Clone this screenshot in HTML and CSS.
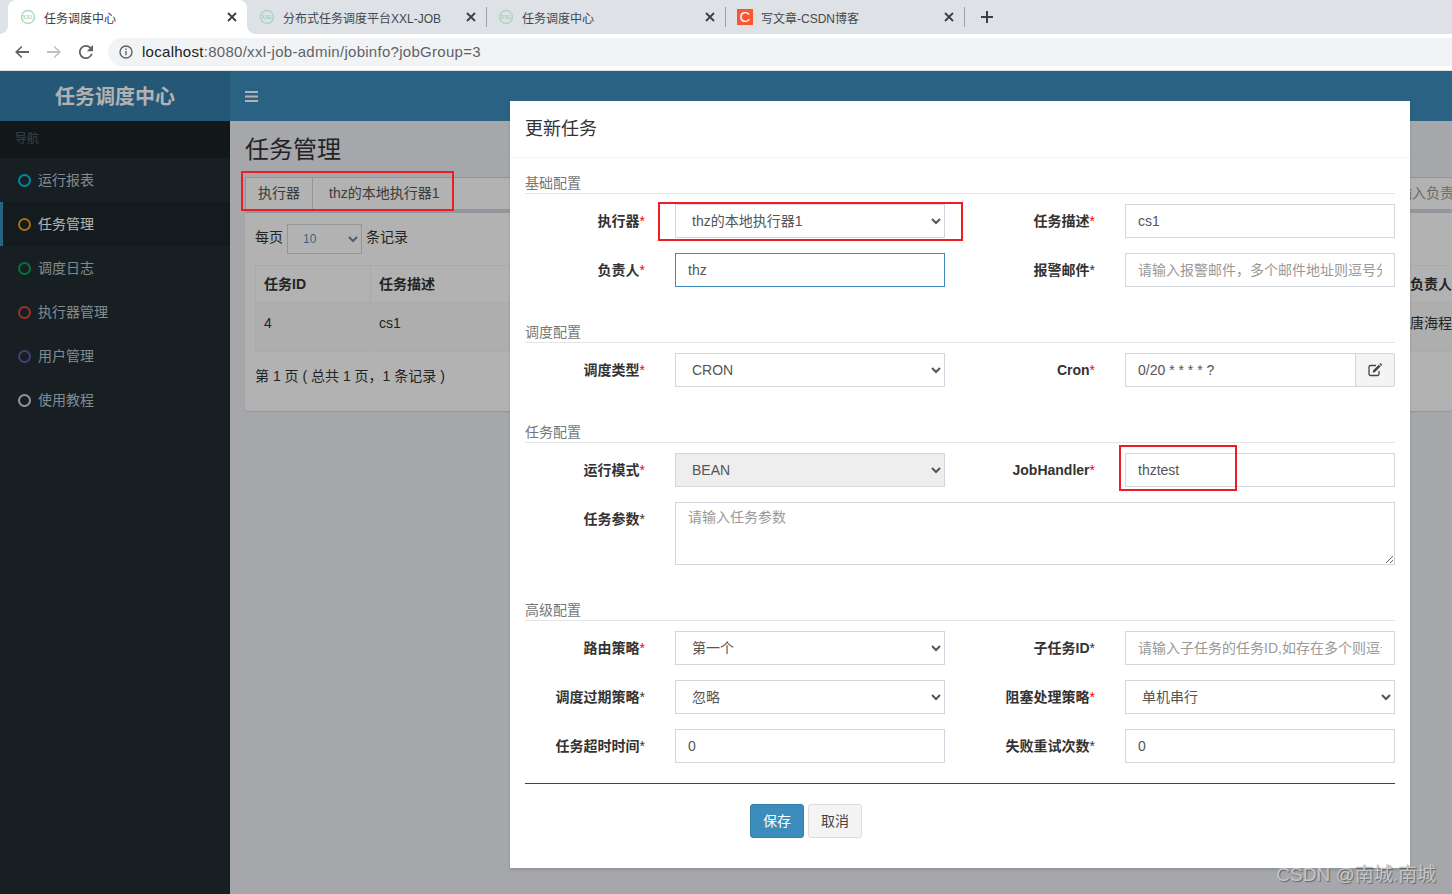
FILE: index.html
```html
<!DOCTYPE html>
<html lang="zh-CN">
<head>
<meta charset="utf-8">
<title>任务调度中心</title>
<link rel="stylesheet" href="styles.css">
</head>
<body>
<div class="tabstrip">
  <div class="tab active">
    <svg class="favicon" viewBox="0 0 16 16"><circle cx="8" cy="8" r="6.500" fill="none" stroke="#a0d8c0" stroke-width="1.300"/><text x="8" y="10" text-anchor="middle" class="favtext">XXL</text></svg>
    <span class="tab-title">任务调度中心</span>
    <svg class="close" viewBox="0 0 10 10"><path d="M1 1l8 8M9 1l-8 8"/></svg>
  </div>
  <div class="tab sep">
    <svg class="favicon" viewBox="0 0 16 16"><circle cx="8" cy="8" r="6.500" fill="none" stroke="#a0d8c0" stroke-width="1.300"/><text x="8" y="10" text-anchor="middle" class="favtext">XXL</text></svg>
    <span class="tab-title">分布式任务调度平台XXL-JOB</span>
    <svg class="close" viewBox="0 0 10 10"><path d="M1 1l8 8M9 1l-8 8"/></svg>
  </div>
  <div class="tab sep">
    <svg class="favicon" viewBox="0 0 16 16"><circle cx="8" cy="8" r="6.500" fill="none" stroke="#a0d8c0" stroke-width="1.300"/><text x="8" y="10" text-anchor="middle" class="favtext">XXL</text></svg>
    <span class="tab-title">任务调度中心</span>
    <svg class="close" viewBox="0 0 10 10"><path d="M1 1l8 8M9 1l-8 8"/></svg>
  </div>
  <div class="tab sep">
    <span class="csdn-icon">C</span>
    <span class="tab-title">写文章-CSDN博客</span>
    <svg class="close" viewBox="0 0 10 10"><path d="M1 1l8 8M9 1l-8 8"/></svg>
  </div>
  <svg class="newtab" viewBox="0 0 12 12"><path d="M6 0v12M0 6h12"/></svg>
</div>

<div class="toolbar">
  <svg class="nav-icon" viewBox="0 0 14 12"><path class="ico-dark" d="M14 5.100H3.400l4-4L6.300 0 0 6l6.300 6 1.100-1.100-4-4H14z"/></svg>
  <svg class="nav-icon" viewBox="0 0 14 12"><path class="ico-light" d="M0 5.100h10.600l-4-4L7.700 0 14 6l-6.300 6-1.100-1.100 4-4H0z"/></svg>
  <svg class="nav-icon reload" viewBox="0 0 16 16"><path class="ico-dark" d="M13.600 2.400A8 8 0 1 0 15.700 10h-2.100a6 6 0 1 1-1.400-6.200L9 7h7V0z"/></svg>
  <div class="omnibox">
    <svg class="info" viewBox="0 0 14 14"><circle cx="7" cy="7" r="6" fill="none" stroke="#5f6368" stroke-width="1.400"/><path d="M6.300 6h1.400v4.200H6.300zM6.300 3.600h1.400V5H6.300z" fill="#5f6368"/></svg>
    <span class="url"><span class="host">localhost</span>:8080/xxl-job-admin/jobinfo?jobGroup=3</span>
  </div>
</div>

<div class="app">
  <aside class="sidebar">
    <div class="logo">任务调度中心</div>
    <div class="nav-header">导航</div>
    <div class="nav-item"><i class="ring aqua"></i>运行报表</div>
    <div class="nav-item current"><i class="ring yellow"></i>任务管理</div>
    <div class="nav-item"><i class="ring green"></i>调度日志</div>
    <div class="nav-item"><i class="ring red"></i>执行器管理</div>
    <div class="nav-item"><i class="ring purple"></i>用户管理</div>
    <div class="nav-item"><i class="ring gray"></i>使用教程</div>
  </aside>

  <main class="main">
    <div class="topbar">
      <svg class="bars" viewBox="0 0 13 11"><path d="M0 0h13v2H0zM0 4.500h13v2H0zM0 9h13v2H0z"/></svg>
    </div>
    <div class="content">
      <h1 class="page-title">任务管理</h1>
      <div class="filters">
        <div class="filter-group">
          <span class="addon">执行器</span>
          <span class="filter-value">thz的本地执行器1</span>
        </div>
        <div class="filter-input">请输入负责人</div>
      </div>
      <section class="box">
        <div class="length-row">每页<select class="length"><option>10</option></select>条记录</div>
        <table class="grid-table">
          <thead>
            <tr><th class="c1">任务ID</th><th class="c2">任务描述</th><th class="c3">负责人</th></tr>
          </thead>
          <tbody>
            <tr><td>4</td><td>cs1</td><td>唐海程</td></tr>
          </tbody>
        </table>
        <div class="page-info">第 1 页 ( 总共 1 页，1 条记录 )</div>
      </section>
    </div>
  </main>

  <div class="backdrop"></div>

  <div class="modal">
    <h4 class="modal-title">更新任务</h4>
    <form class="modal-body">
      <div class="legend first">基础配置</div>
      <div class="form-grid">
        <label class="lbl">执行器<em>*</em></label>
        <select class="ctl"><option>thz的本地执行器1</option></select>
        <label class="lbl">任务描述<em>*</em></label>
        <input class="ctl" value="cs1">
        <label class="lbl">负责人<em>*</em></label>
        <input class="ctl focus" value="thz">
        <label class="lbl">报警邮件<b>*</b></label>
        <input class="ctl" placeholder="请输入报警邮件，多个邮件地址则逗号分隔">
      </div>

      <div class="legend">调度配置</div>
      <div class="form-grid">
        <label class="lbl">调度类型<em>*</em></label>
        <select class="ctl"><option>CRON</option></select>
        <label class="lbl">Cron<em>*</em></label>
        <div class="input-group">
          <input class="ctl" value="0/20 * * * * ?">
          <span class="group-btn"><svg viewBox="0 0 14 14"><path class="edit-box" d="M11 8v3a1.500 1.500 0 0 1-1.500 1.500h-7A1.500 1.500 0 0 1 1 11V4a1.500 1.500 0 0 1 1.500-1.500H8"/><path class="edit-pen" d="M5 7.500L10.800 1.700l1.800 1.800L6.800 9.300 4.800 9.600zM11.400 1.100l.6-.6a.7.700 0 0 1 1 0l.8.8a.7.700 0 0 1 0 1l-.6.6z"/></svg></span>
        </div>
      </div>

      <div class="legend">任务配置</div>
      <div class="form-grid">
        <label class="lbl">运行模式<em>*</em></label>
        <select class="ctl disabled"><option>BEAN</option></select>
        <label class="lbl">JobHandler<em>*</em></label>
        <input class="ctl" value="thztest">
        <label class="lbl">任务参数<b>*</b></label>
        <textarea class="ctl area" placeholder="请输入任务参数"></textarea>
      </div>

      <div class="legend">高级配置</div>
      <div class="form-grid">
        <label class="lbl">路由策略<em>*</em></label>
        <select class="ctl"><option>第一个</option></select>
        <label class="lbl">子任务ID<b>*</b></label>
        <input class="ctl" placeholder="请输入子任务的任务ID,如存在多个则逗号分隔">
        <label class="lbl">调度过期策略<b>*</b></label>
        <select class="ctl"><option>忽略</option></select>
        <label class="lbl">阻塞处理策略<em>*</em></label>
        <select class="ctl"><option>单机串行</option></select>
        <label class="lbl">任务超时时间<b>*</b></label>
        <input class="ctl" value="0">
        <label class="lbl">失败重试次数<b>*</b></label>
        <input class="ctl" value="0">
      </div>

      <hr class="rule">
      <div class="actions">
        <button type="button" class="btn primary">保存</button>
        <button type="button" class="btn">取消</button>
      </div>
    </form>
  </div>

  <div class="mark mark-filter"></div>
  <div class="mark mark-executor"></div>
  <div class="mark mark-handler"></div>
  <div class="watermark">CSDN @南城.南城</div>
</div>
</body>
</html>
```
FILE: styles.css
```css
* { box-sizing: border-box; }
html, body { margin: 0; height: 894px; overflow: hidden; }
body {
  font-family: "Liberation Sans", "Noto Sans CJK SC", sans-serif;
  font-size: 14px;
  color: #333;
  background: #fff;
}

/* browser chrome */
.tabstrip {
  display: flex;
  align-items: center;
  height: 34px;
  padding-left: 8px;
  background: #dee1e6;
}
.tab {
  position: relative;
  display: flex;
  align-items: center;
  flex: 0 0 239px;
  height: 34px;
  padding: 0 10px 0 12px;
  font-size: 12px;
  color: #45484c;
}
.tab.active {
  background: #fff;
  border-radius: 8px 8px 0 0;
  color: #3c4043;
}
.tab.active::before,
.tab.active::after {
  content: "";
  position: absolute;
  bottom: 0;
  width: 8px;
  height: 8px;
}
.tab.active::before {
  left: -8px;
  background: radial-gradient(circle at 0 0, #dee1e6 7.500px, #fff 8px);
}
.tab.active::after {
  right: -8px;
  background: radial-gradient(circle at 100% 0, #dee1e6 7.500px, #fff 8px);
}
.tab.sep::after {
  content: "";
  position: absolute;
  right: -1px;
  top: 7px;
  width: 1px;
  height: 20px;
  background: #9aa0a6;
}
.favicon { flex: none; width: 16px; height: 16px; margin-right: 8px; }
.favtext { font-size: 5.500px; fill: #84c8a8; font-family: "Liberation Serif", serif; }
.csdn-icon {
  flex: none;
  width: 16px;
  height: 16px;
  margin-right: 8px;
  background: #fc5531;
  color: #fff;
  font-size: 15px;
  line-height: 16px;
  text-align: center;
}
.tab-title { flex: 1; white-space: nowrap; overflow: hidden; }
.close { flex: none; width: 10px; height: 10px; }
.close path { stroke: #3c4043; stroke-width: 1.800; fill: none; }
.newtab { flex: none; width: 12px; height: 12px; margin-left: 17px; }
.newtab path { stroke: #3c4043; stroke-width: 2; fill: none; }

.toolbar {
  display: flex;
  align-items: center;
  height: 37px;
  padding: 4px 0 4px 15px;
  background: #fff;
  border-bottom: 1px solid #dfe1e5;
}
.nav-icon { flex: none; width: 14px; height: 12px; margin-right: 18px; }
.nav-icon.reload { height: 14px; margin-right: 15px; }
.ico-dark { fill: #5f6368; }
.ico-light { fill: #bdc1c6; }
.omnibox {
  display: flex;
  align-items: center;
  flex: 1;
  height: 28px;
  padding-left: 11px;
  background: #f1f3f4;
  border-radius: 14px 0 0 14px;
}
.info { flex: none; width: 14px; height: 14px; margin-right: 9px; }
.url {
  padding-bottom: 2px;
  font-size: 15px;
  letter-spacing: .28px;
  color: #5f6368;
  white-space: nowrap;
}
.host { color: #202124; }

/* application */
.app {
  position: relative;
  display: flex;
  height: 823px;
  overflow: hidden;
  background: #ecf0f5;
}
.sidebar { flex: 0 0 230px; background: #222d32; color: #b8c7ce; }
.logo {
  height: 50px;
  background: #367fa9;
  color: #fff;
  font-size: 20px;
  font-weight: bold;
  line-height: 52px;
  text-align: center;
}
.nav-header {
  height: 37px;
  padding-left: 15px;
  background: #1a2226;
  color: #4b646f;
  font-size: 12px;
  line-height: 37px;
}
.nav-item {
  display: flex;
  align-items: center;
  gap: 7px;
  height: 44px;
  padding: 0 0 2px 18px;
}
.nav-item.current {
  padding-left: 15px;
  border-left: 3px solid #3c8dbc;
  background: #1e282c;
  color: #fff;
}
.ring {
  flex: none;
  width: 13px;
  height: 13px;
  margin-top: 2px;
  border: 2px solid;
  border-radius: 50%;
}
.aqua { border-color: #00c0ef; }
.yellow { border-color: #f39c12; }
.green { border-color: #00a65a; }
.red { border-color: #dd4b39; }
.purple { border-color: #605ca8; }
.gray { border-color: #d2d6de; }

.main { flex: 1; min-width: 0; overflow: hidden; }
.topbar {
  display: flex;
  align-items: center;
  height: 50px;
  padding-left: 15px;
  background: #3c8dbc;
}
.bars { width: 13px; height: 11px; fill: #fff; }
.content { padding: 15px 0 0 15px; }
.page-title {
  margin: 0 0 14px;
  font-size: 24px;
  font-weight: 400;
  line-height: 27px;
}
.filters { display: flex; height: 33px; }
.filter-group {
  display: flex;
  flex: 0 0 1125px;
  border: 1px solid #d2d6de;
  background: #fff;
  line-height: 31px;
  color: #555;
}
.addon { flex: 0 0 67px; text-align: center; border-right: 1px solid #d2d6de; }
.filter-value { padding-left: 16px; }
.filter-input {
  flex: none;
  width: 200px;
  padding-left: 13px;
  border: 1px solid #d2d6de;
  background: #fff;
  color: #999;
  line-height: 31px;
}
.box {
  height: 201px;
  padding: 11px 0 0 10px;
  border-top: 3px solid #d2d6de;
  border-radius: 3px;
  background: #fff;
  box-shadow: 0 1px 1px rgba(0, 0, 0, .1);
}
.length-row { display: flex; align-items: flex-start; height: 30px; line-height: 26px; color: #333; }
.length {
  flex: none;
  width: 75px;
  height: 30px;
  margin: 0 4px;
  padding: 0 11px;
  border: 1px solid #d2d6de;
  border-radius: 0;
  background: #fff;
  color: #5f8fb0;
  font: 12px "Liberation Sans", sans-serif;
}
.grid-table {
  width: 1300px;
  margin-top: 11px;
  border-collapse: collapse;
  table-layout: fixed;
  line-height: 20px;
}
.grid-table th, .grid-table td { padding: 8px; border: 1px solid #f4f4f4; text-align: left; }
.grid-table th { height: 37px; font-weight: bold; }
.grid-table td { height: 49px; padding-top: 10px; vertical-align: top; color: #333; background: #f9f9f9; }
.c1 { width: 115px; }
.c2 { width: 1031px; }
.page-info { margin-top: 14px; line-height: 20px; }

.backdrop { position: absolute; inset: 0; background: rgba(0, 0, 0, .3); }

/* dialog */
.modal {
  position: absolute;
  left: 510px;
  top: 30px;
  width: 900px;
  height: 767px;
  background: #fff;
  box-shadow: 0 2px 3px rgba(0, 0, 0, .125);
}
.modal-title {
  height: 57px;
  margin: 0;
  padding-left: 15px;
  border-bottom: 1px solid #f4f4f4;
  font-size: 18px;
  font-weight: 400;
  line-height: 57px;
}
.modal-body { display: block; padding: 0 15px; }
.legend {
  height: 21px;
  margin: 35px 0 10px;
  border-bottom: 1px solid #e5e5e5;
  color: #777;
  line-height: 20px;
}
.legend.first { margin-top: 15px; }
.form-grid {
  display: grid;
  grid-template-columns: 150px 270px 180px 270px;
  row-gap: 15px;
}
.lbl {
  padding-right: 30px;
  font-weight: bold;
  line-height: 34px;
  text-align: right;
  white-space: nowrap;
}
.lbl em { color: #f00; font-style: normal; font-weight: 400; }
.lbl b { font-weight: 400; }
.ctl {
  display: block;
  width: 100%;
  height: 34px;
  padding: 6px 12px;
  border: 1px solid #d2d6de;
  border-radius: 0;
  outline: 0;
  background: #fff;
  color: #555;
  font: 14px "Liberation Sans", "Noto Sans CJK SC", sans-serif;
}
.ctl::placeholder { color: #999; opacity: 1; }
.ctl.focus { border-color: #3c8dbc; }
.ctl.disabled { background: #eee; }
.ctl.area { grid-column: 2 / 5; height: 63px; padding-top: 3px; }
.input-group { display: flex; }
.input-group .ctl { flex: 1; min-width: 0; }
.group-btn {
  display: flex;
  align-items: center;
  justify-content: center;
  flex: 0 0 39px;
  border: 1px solid #d2d6de;
  border-left: 0;
  border-radius: 0 3px 3px 0;
  background: #f4f4f4;
}
.group-btn svg { width: 14px; height: 14px; }
.edit-box { fill: none; stroke: #444; stroke-width: 1.300; }
.edit-pen { fill: #444; }
.rule { height: 1px; margin: 20px 0; border: 0; background: #444; }
.actions { display: flex; gap: 4px; padding-left: 225px; }
.btn {
  width: 54px;
  height: 34px;
  padding: 0 0 2px;
  border: 1px solid #ddd;
  border-radius: 3px;
  background: #f4f4f4;
  color: #444;
  font: 14px "Liberation Sans", "Noto Sans CJK SC", sans-serif;
}
.btn.primary { border-color: #367fa9; background: #3c8dbc; color: #fff; }

/* annotations drawn over the screenshot */
.mark { position: absolute; border: 2px solid #ee1c25; }
.mark-filter { left: 241px; top: 100px; width: 213px; height: 40px; }
.mark-executor { left: 658px; top: 131px; width: 305px; height: 39px; }
.mark-handler { left: 1119px; top: 374px; width: 118px; height: 46px; }
.watermark {
  position: absolute;
  right: 16px;
  bottom: 7px;
  color: #c4c6c8;
  font-size: 19px;
  line-height: 24px;
  text-shadow: 1px 1px 1px rgba(0, 0, 0, .4);
  white-space: nowrap;
}
```
